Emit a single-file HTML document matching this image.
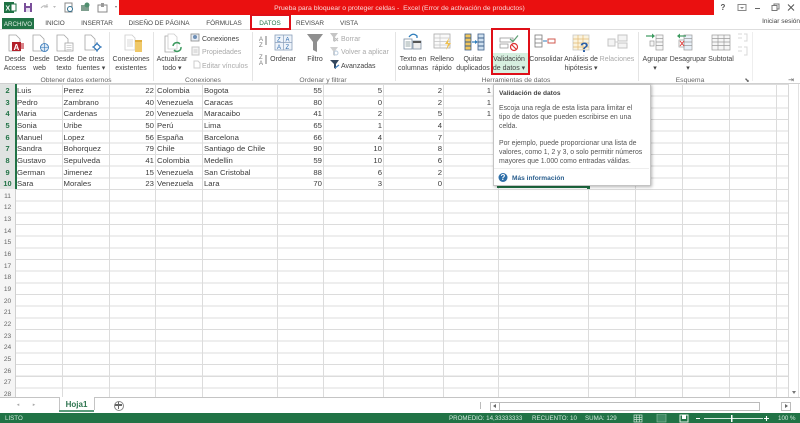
<!DOCTYPE html>
<html lang="es"><head><meta charset="utf-8"><title>Excel</title>
<style>
html,body{margin:0;padding:0;background:#fff}
#p{position:relative;width:800px;height:423px;overflow:hidden;background:#fff;font-family:"Liberation Sans",sans-serif;color:#444;font-size:7px;line-height:10px;filter:blur(.3px)}
#p div{position:absolute}
.t,.c{white-space:nowrap}
.c{transform:translateX(-50%);text-align:center}
.r{white-space:nowrap;transform:translateX(-100%)}
.b{line-height:9px;color:#444;margin-top:2px}
.g{color:#666;font-size:6.8px;margin-top:1.5px}
.tab{font-size:6.4px;color:#444;top:15px;margin-top:1px}
.m{margin-top:1.500px}
.s{font-size:7.75px;color:#3c3c3c;margin-top:1px}
.v{top:84px;height:313px;width:1px;background:#dcdcdc}
.n{left:0;width:15px;text-align:center;color:#666;font-size:6.6px;margin-top:1.500px}
.h{left:0;width:15px;height:11px;text-align:center;color:#217346;font-weight:bold;font-size:7.4px;line-height:11px}
.tip{font-size:6.9px;left:499px;color:#555;margin-top:2px}
.st{top:414px;color:#d3e8dc;font-size:6.2px;line-height:10px;white-space:nowrap}
</style></head><body><div id="p">

<!-- title bar -->
<div style="left:119px;top:0;width:595px;height:15px;background:#ea1010"></div>
<div class="c" style="left:399.500px;top:4px;color:#f8dcdc;font-size:6.85px">Prueba para bloquear o proteger celdas -&nbsp; Excel (Error de activación de productos)</div>
<svg style="position:absolute;left:0;top:0" width="800" height="30">
<rect x="4" y="2" width="10" height="11" fill="#1f7244"/><rect x="11" y="4" width="5" height="7" fill="#fff" stroke="#1f7244"/><text x="5.500" y="10.500" font-size="7" font-weight="bold" fill="#fff" font-family="Liberation Sans">X</text>
<rect x="24" y="3" width="8" height="9" fill="#7a4f9a"/><rect x="26" y="3" width="4" height="3" fill="#fff"/><rect x="26" y="8" width="4" height="4" fill="#e6dff0"/>
<path d="M41 8q3-4 7-1M47 4v3h-3" fill="none" stroke="#bbb"/><path d="M53 6h3l-1.500 2z" fill="#bbb"/>
<rect x="65" y="3" width="7" height="9" fill="#fff" stroke="#888"/><circle cx="70" cy="9" r="2.500" fill="#fff" stroke="#2f6f8f"/>
<rect x="81" y="5" width="8" height="6" fill="#7f9f8f"/><circle cx="87" cy="5" r="2.500" fill="#4f8f6f"/>
<rect x="98" y="5" width="9" height="7" fill="#fff" stroke="#888"/><rect x="101" y="3" width="3" height="4" fill="#999"/>
<path d="M115 6h2l-1 2z" fill="#777"/>
<rect x="738" y="4.500" width="8" height="6" fill="none" stroke="#888"/><path d="M740 7h4l-2 2z" fill="#888"/>
<path d="M755 8.500h5" stroke="#666"/><rect x="772" y="5.500" width="5" height="5" fill="none" stroke="#777"/><path d="M774 5.500v-1.500h5v5h-2" fill="none" stroke="#777"/>
<path d="M788 4.500l6 6M794 4.500l-6 6" stroke="#555"/>
</svg>
<div class="c" style="left:723px;top:3px;font-size:8px;color:#555;font-weight:bold">?</div>

<!-- tabs -->
<div style="left:0;top:29px;width:800px;height:1px;background:#dedede"></div>
<div style="left:2px;top:18px;width:32px;height:11px;background:#217346"></div>
<div class="c tab" style="left:18px;top:18px;color:#e6f2ea;line-height:11px;font-size:6.2px">ARCHIVO</div>
<div class="c tab" style="left:55px;top:17px;line-height:11px">INICIO</div>
<div class="c tab" style="left:97px;top:17px;line-height:11px">INSERTAR</div>
<div class="c tab" style="left:159px;top:17px;line-height:11px">DISEÑO DE PÁGINA</div>
<div class="c tab" style="left:224px;top:17px;line-height:11px">FÓRMULAS</div>
<div style="left:250px;top:14px;width:37px;height:12px;border:2px solid #df0f18;background:#fff"></div>
<div class="c tab" style="left:270px;top:17px;line-height:11px;color:#217346">DATOS</div>
<div class="c tab" style="left:310px;top:17px;line-height:11px">REVISAR</div>
<div class="c tab" style="left:349px;top:17px;line-height:11px">VISTA</div>
<div class="r" style="left:800px;top:17px;font-size:6.5px">Iniciar sesión</div>

<!-- ribbon separators -->
<div style="left:109px;top:32px;width:1px;height:49px;background:#e4e4e4"></div>
<div style="left:153px;top:32px;width:1px;height:49px;background:#e4e4e4"></div>
<div style="left:252px;top:32px;width:1px;height:49px;background:#e4e4e4"></div>
<div style="left:395px;top:32px;width:1px;height:49px;background:#e4e4e4"></div>
<div style="left:638px;top:32px;width:1px;height:49px;background:#e4e4e4"></div>
<div style="left:752px;top:32px;width:1px;height:49px;background:#eeeeee"></div>
<div style="left:0;top:83px;width:800px;height:1px;background:#d0d0d0"></div>

<div style="left:492px;top:53px;width:36px;height:20px;background:#d6efdf"></div>

<!-- ribbon icons -->
<svg style="position:absolute;left:0;top:29px" width="800" height="44" viewBox="0 29 800 44">
<g fill="#fff" stroke="#a5a5a5" stroke-width=".8">
<path d="M9 35h7l4 4v12H9z"/><path d="M33 35h7l4 4v12H33z"/><path d="M57 35h7l4 4v12H57z"/><path d="M85 35h6l4 4v11H85z"/>
<path d="M125 35h7l3 3v12h-10z" stroke="#ccc"/><path d="M165 36h7l3 3v13h-10z"/><path d="M168 34h6l3 3v12h-9z" stroke="#ccc"/>
</g>
<rect x="12" y="42" width="9" height="9" fill="#b3202a"/><text x="13.500" y="50" font-size="8" font-weight="bold" fill="#fff" font-family="Liberation Sans">A</text>
<rect x="21" y="43" width="3" height="6" fill="#d9848a"/>
<circle cx="44.500" cy="47.500" r="4" fill="#dbe8f5" stroke="#2c72b5" stroke-width=".8"/><path d="M40.500 47.500h8M44.500 43.500v8" stroke="#2c72b5" stroke-width=".6"/>
<rect x="65" y="43" width="8" height="8" fill="#fff" stroke="#a5a5a5" stroke-width=".8"/><path d="M66.500 45.500h5M66.500 47.500h5M66.500 49.500h5" stroke="#aaa" stroke-width=".6"/>
<path d="M97 42v10M92 47h10" stroke="#2c72b5" stroke-width=".8"/><rect x="94.500" y="44.500" width="5" height="5" transform="rotate(45 97 47)" fill="#fff" stroke="#2c72b5" stroke-width="1.200"/>
<path d="M127 40h6M127 42h6M127 44h6M127 46h6" stroke="#d9d9d9"/><rect x="135" y="41" width="7" height="11" fill="#efc868"/><rect x="135" y="40" width="7" height="2" fill="#e0ad3e"/>
<path d="M173 46a4 4 0 0 1 7-2M181 47a4 4 0 0 1-7 3" fill="none" stroke="#3c9a5f" stroke-width="1.500"/>
<rect x="191" y="34" width="8" height="7" fill="#e8edf5" stroke="#8a8a8a" stroke-width=".8"/><circle cx="195" cy="37" r="2" fill="#6f8fb5"/>
<rect x="192" y="47" width="7" height="8" fill="#f5f5f5" stroke="#c5c5c5"/><path d="M193.500 50h4M193.500 52h4" stroke="#ccc"/>
<path d="M194 61h4l2 2v5h-6z" fill="#fff" stroke="#ccc"/>
<text x="259" y="41" font-size="6" fill="#777" font-family="Liberation Sans">A</text><text x="259" y="47" font-size="6" fill="#777" font-family="Liberation Sans">Z</text><path d="M266 36v9" stroke="#777"/>
<text x="259" y="59" font-size="6" fill="#777" font-family="Liberation Sans">Z</text><text x="259" y="65" font-size="6" fill="#777" font-family="Liberation Sans">A</text><path d="M266 55v9" stroke="#777"/>
<rect x="275" y="35" width="17" height="15" fill="#eef3fa" stroke="#8a9fba" stroke-width=".8"/><path d="M283.500 35v15M275 42.500h17" stroke="#8a9fba" stroke-width=".7"/>
<text x="277" y="41.500" font-size="6" fill="#2f6cae" font-family="Liberation Sans">Z</text><text x="285.500" y="41.500" font-size="6" fill="#2f6cae" font-family="Liberation Sans">A</text><text x="277" y="49" font-size="6" fill="#2f6cae" font-family="Liberation Sans">A</text><text x="285.500" y="49" font-size="6" fill="#2f6cae" font-family="Liberation Sans">Z</text>
<path d="M307 34h16l-6 8v10l-4-2v-8z" fill="#8f8f8f"/>
<path d="M330 33h8l-3 4v5l-2-1v-4z" fill="#c5c5c5"/><path d="M335 38l3 3M338 38l-3 3" stroke="#bbb"/>
<path d="M330 47h8l-3 4v5l-2-1v-4z" fill="#d0d0d0"/><circle cx="336" cy="53" r="2" fill="none" stroke="#bcd"/>
<path d="M330 60h9l-3 4v5l-2-1v-4z" fill="#33475f"/><path d="M335 68l4-3" stroke="#3f7fbf" stroke-width="1.200"/>
<rect x="404" y="39" width="8" height="10" fill="#fff" stroke="#7d8fa3" stroke-width=".8"/><path d="M405.500 42h5M405.500 44h5M405.500 46h5" stroke="#9aa"/><rect x="413" y="41" width="8" height="8" fill="#eee" stroke="#7d8fa3" stroke-width=".8"/><rect x="413" y="41" width="8" height="2" fill="#555"/>
<path d="M409 37q4-5 8-1v2" fill="none" stroke="#2f7dbb" stroke-width="1.300"/>
<rect x="434" y="34" width="16" height="14" fill="#fafafa" stroke="#aaa" stroke-width=".8"/><path d="M434 38h16M434 41.500h16M434 45h16M440 34v14" stroke="#c5c5c5" stroke-width=".7"/><path d="M449 38l-4 6h3l-2 6 5-7h-3z" fill="#efc04f"/>
<rect x="465" y="34" width="6" height="16" fill="#f0c55c" stroke="#3d5f8a" stroke-width=".8"/><path d="M465 38h6M465 42h6M465 46h6" stroke="#3d5f8a"/>
<rect x="478" y="34" width="6" height="16" fill="#cfe0ef" stroke="#3d5f8a" stroke-width=".8"/><path d="M478 38h6M478 42h6M478 46h6" stroke="#3d5f8a"/><path d="M472 42h4" stroke="#2f7dbb" stroke-width="1.200"/><path d="M475 40l3 2-3 2z" fill="#2f7dbb"/>
<rect x="500" y="38" width="13" height="4" fill="#fff" stroke="#999" stroke-width=".8"/><rect x="500" y="44" width="8" height="4" fill="#fff" stroke="#999" stroke-width=".8"/><path d="M510 39l3 2.500 5-6" fill="none" stroke="#5c9e72" stroke-width="1.200"/><circle cx="514" cy="47" r="3.500" fill="#fff" stroke="#d33" stroke-width="1.200"/><path d="M511.500 44.500l5 5" stroke="#d33" stroke-width="1.200"/>
<rect x="535" y="35" width="7" height="12" fill="#fff" stroke="#7a7a7a" stroke-width=".8"/><path d="M535 39h7M535 43h7" stroke="#7a7a7a" stroke-width=".7"/><path d="M543 41h4" stroke="#2f7dbb"/><rect x="548" y="39" width="7" height="4" fill="#fff" stroke="#d0584f"/>
<rect x="573" y="35" width="16" height="15" fill="#fbf3dd" stroke="#c9c9c9" stroke-width=".8"/><path d="M573 39h16M573 43h16M573 47h16M578 35v15M583 35v15" stroke="#e1b972" stroke-width=".7"/><text x="580" y="52" font-size="14" font-weight="bold" fill="#2a5fa8" font-family="Liberation Sans">?</text>
<rect x="608" y="39" width="7" height="7" fill="#f4f4f4" stroke="#c4c4c4"/><rect x="618" y="35" width="9" height="6" fill="#f4f4f4" stroke="#c4c4c4"/><rect x="618" y="43" width="9" height="5" fill="#f4f4f4" stroke="#c4c4c4"/><path d="M615 42h3" stroke="#ccc"/>
<path d="M646 36h7" stroke="#3c9a5f" stroke-width="1.200"/><path d="M652 33.500l3 2.500-3 2.500z" fill="#3c9a5f"/>
<g fill="#f6f6f6" stroke="#9a9a9a" stroke-width=".7"><rect x="656" y="35" width="7" height="15"/><rect x="650" y="41" width="4" height="5"/><rect x="684" y="35" width="8" height="15" fill="#e8f0f8"/><rect x="679" y="40" width="5" height="7" fill="#fff"/><rect x="712" y="35" width="18" height="15"/></g>
<path d="M656 38.500h7M656 42h7M656 45.500h7M684 38.500h8M684 42h8M684 45.500h8M712 38.500h18M712 42h18M712 45.500h18M718 35v15M724 35v15" stroke="#9a9a9a" stroke-width=".7"/>
<path d="M686 36h-7" stroke="#3c9a5f" stroke-width="1.200"/><path d="M680 33.500l-3 2.500 3 2.500z" fill="#3c9a5f"/><path d="M680 46l4-5M684 46l-4-5" stroke="#d33" stroke-width=".9"/>
<path d="M738 34h4M738 38h4M744 34h3v7h-3M738 47h4M738 51h4M744 47h3v8h-3" fill="none" stroke="#d8d8d8"/>
</svg>
<div style="left:491px;top:28px;width:35px;height:43px;border:2.500px solid #df0f18"></div>

<!-- ribbon labels -->
<div class="c b" style="left:15px;top:53px">Desde<br>Access</div>
<div class="c b" style="left:39.500px;top:53px">Desde<br>web</div>
<div class="c b" style="left:64px;top:53px">Desde<br>texto</div>
<div class="c b" style="left:91px;top:53px">De otras<br>fuentes ▾</div>
<div class="c b" style="left:131px;top:53px">Conexiones<br>existentes</div>
<div class="c b" style="left:172px;top:53px">Actualizar<br>todo ▾</div>
<div class="t m" style="left:202px;top:33px">Conexiones</div>
<div class="t m" style="left:202px;top:46px;color:#aaa">Propiedades</div>
<div class="t m" style="left:202px;top:60px;color:#aaa">Editar vínculos</div>
<div class="c b" style="left:283px;top:53px">Ordenar</div>
<div class="c b" style="left:315px;top:53px">Filtro</div>
<div class="t m" style="left:341px;top:33px;color:#aaa">Borrar</div>
<div class="t m" style="left:341px;top:46px;color:#aaa">Volver a aplicar</div>
<div class="t m" style="left:341px;top:60px">Avanzadas</div>
<div class="c b" style="left:413px;top:53px">Texto en<br>columnas</div>
<div class="c b" style="left:442px;top:53px">Relleno<br>rápido</div>
<div class="c b" style="left:473px;top:53px">Quitar<br>duplicados</div>
<div class="c b" style="left:509px;top:53px">Validación<br>de datos ▾</div>
<div class="c b" style="left:546px;top:53px">Consolidar</div>
<div class="c b" style="left:581px;top:53px">Análisis de<br>hipótesis ▾</div>
<div class="c b" style="left:617px;top:53px;color:#aaa">Relaciones</div>
<div class="c b" style="left:655px;top:53px">Agrupar<br>▾</div>
<div class="c b" style="left:688px;top:53px">Desagrupar<br>▾</div>
<div class="c b" style="left:721px;top:53px">Subtotal</div>
<div class="c g" style="left:76px;top:74px">Obtener datos externos</div>
<div class="c g" style="left:203px;top:74px">Conexiones</div>
<div class="c g" style="left:323px;top:74px">Ordenar y filtrar</div>
<div class="c g" style="left:516px;top:74px">Herramientas de datos</div>
<div class="c g" style="left:690px;top:74px">Esquema</div>
<div class="c g" style="left:747px;top:74px;font-size:6px">⬊</div>
<div class="c g" style="left:791px;top:74px;font-size:7px">⇥</div>

<!-- grid -->
<div style="left:0;top:84px;width:788px;height:313px;background:repeating-linear-gradient(to bottom,#dcdcdc 0,#dcdcdc 1px,#fff 1px,#fff 11.67px)"></div>
<div class="v" style="left:62px"></div><div class="v" style="left:109px"></div><div class="v" style="left:155px"></div><div class="v" style="left:202px"></div><div class="v" style="left:277px"></div><div class="v" style="left:323px"></div><div class="v" style="left:383px"></div><div class="v" style="left:443px"></div><div class="v" style="left:498px"></div><div class="v" style="left:588px"></div><div class="v" style="left:635px"></div><div class="v" style="left:682px"></div><div class="v" style="left:729px"></div><div class="v" style="left:776px"></div>
<div style="left:0;top:84px;width:15px;height:313px;background:#f5f5f5"></div>
<div style="left:0;top:84px;width:15px;height:105px;background:#dfe3e1"></div>
<div style="left:15px;top:84px;width:1px;height:313px;background:#d0d0d0"></div>
<div style="left:15px;top:84px;width:1.500px;height:105px;background:#217346"></div>

<div class="h" style="top:85px">2</div>
<div class="h" style="top:96.700px">3</div>
<div class="h" style="top:108.400px">4</div>
<div class="h" style="top:120px">5</div>
<div class="h" style="top:131.700px">6</div>
<div class="h" style="top:143.400px">7</div>
<div class="h" style="top:155px">8</div>
<div class="h" style="top:166.700px">9</div>
<div class="h" style="top:178.400px">10</div>
<div class="n" style="top:190px">11</div><div class="n" style="top:201.700px">12</div><div class="n" style="top:213.400px">13</div><div class="n" style="top:225px">14</div><div class="n" style="top:236.700px">15</div><div class="n" style="top:248.400px">16</div><div class="n" style="top:260px">17</div><div class="n" style="top:271.700px">18</div><div class="n" style="top:283.400px">19</div><div class="n" style="top:295px">20</div><div class="n" style="top:306.700px">21</div><div class="n" style="top:318.400px">22</div><div class="n" style="top:330px">23</div><div class="n" style="top:341.700px">24</div><div class="n" style="top:353.400px">25</div><div class="n" style="top:365px">26</div><div class="n" style="top:376.700px">27</div><div class="n" style="top:388.400px">28</div>

<div class="t s" style="left:17px;top:85px">Luis</div><div class="t s" style="left:63.500px;top:85px">Perez</div><div class="r s" style="left:154px;top:85px">22</div><div class="t s" style="left:157px;top:85px">Colombia</div><div class="t s" style="left:204px;top:85px">Bogota</div><div class="r s" style="left:322px;top:85px">55</div><div class="r s" style="left:382px;top:85px">5</div><div class="r s" style="left:442px;top:85px">2</div><div class="r s" style="left:491px;top:85px">1</div>
<div class="t s" style="left:17px;top:96.700px">Pedro</div><div class="t s" style="left:63.500px;top:96.700px">Zambrano</div><div class="r s" style="left:154px;top:96.700px">40</div><div class="t s" style="left:157px;top:96.700px">Venezuela</div><div class="t s" style="left:204px;top:96.700px">Caracas</div><div class="r s" style="left:322px;top:96.700px">80</div><div class="r s" style="left:382px;top:96.700px">0</div><div class="r s" style="left:442px;top:96.700px">2</div><div class="r s" style="left:491px;top:96.700px">1</div>
<div class="t s" style="left:17px;top:108.400px">Maria</div><div class="t s" style="left:63.500px;top:108.400px">Cardenas</div><div class="r s" style="left:154px;top:108.400px">20</div><div class="t s" style="left:157px;top:108.400px">Venezuela</div><div class="t s" style="left:204px;top:108.400px">Maracaibo</div><div class="r s" style="left:322px;top:108.400px">41</div><div class="r s" style="left:382px;top:108.400px">2</div><div class="r s" style="left:442px;top:108.400px">5</div><div class="r s" style="left:491px;top:108.400px">1</div>
<div class="t s" style="left:17px;top:120px">Sonia</div><div class="t s" style="left:63.500px;top:120px">Uribe</div><div class="r s" style="left:154px;top:120px">50</div><div class="t s" style="left:157px;top:120px">Perú</div><div class="t s" style="left:204px;top:120px">Lima</div><div class="r s" style="left:322px;top:120px">65</div><div class="r s" style="left:382px;top:120px">1</div><div class="r s" style="left:442px;top:120px">4</div>
<div class="t s" style="left:17px;top:131.700px">Manuel</div><div class="t s" style="left:63.500px;top:131.700px">Lopez</div><div class="r s" style="left:154px;top:131.700px">56</div><div class="t s" style="left:157px;top:131.700px">España</div><div class="t s" style="left:204px;top:131.700px">Barcelona</div><div class="r s" style="left:322px;top:131.700px">66</div><div class="r s" style="left:382px;top:131.700px">4</div><div class="r s" style="left:442px;top:131.700px">7</div>
<div class="t s" style="left:17px;top:143.400px">Sandra</div><div class="t s" style="left:63.500px;top:143.400px">Bohorquez</div><div class="r s" style="left:154px;top:143.400px">79</div><div class="t s" style="left:157px;top:143.400px">Chile</div><div class="t s" style="left:204px;top:143.400px">Santiago de Chile</div><div class="r s" style="left:322px;top:143.400px">90</div><div class="r s" style="left:382px;top:143.400px">10</div><div class="r s" style="left:442px;top:143.400px">8</div>
<div class="t s" style="left:17px;top:155px">Gustavo</div><div class="t s" style="left:63.500px;top:155px">Sepulveda</div><div class="r s" style="left:154px;top:155px">41</div><div class="t s" style="left:157px;top:155px">Colombia</div><div class="t s" style="left:204px;top:155px">Medellin</div><div class="r s" style="left:322px;top:155px">59</div><div class="r s" style="left:382px;top:155px">10</div><div class="r s" style="left:442px;top:155px">6</div>
<div class="t s" style="left:17px;top:166.700px">German</div><div class="t s" style="left:63.500px;top:166.700px">Jimenez</div><div class="r s" style="left:154px;top:166.700px">15</div><div class="t s" style="left:157px;top:166.700px">Venezuela</div><div class="t s" style="left:204px;top:166.700px">San Cristobal</div><div class="r s" style="left:322px;top:166.700px">88</div><div class="r s" style="left:382px;top:166.700px">6</div><div class="r s" style="left:442px;top:166.700px">2</div>
<div class="t s" style="left:17px;top:178.400px">Sara</div><div class="t s" style="left:63.500px;top:178.400px">Morales</div><div class="r s" style="left:154px;top:178.400px">23</div><div class="t s" style="left:157px;top:178.400px">Venezuela</div><div class="t s" style="left:204px;top:178.400px">Lara</div><div class="r s" style="left:322px;top:178.400px">70</div><div class="r s" style="left:382px;top:178.400px">3</div><div class="r s" style="left:442px;top:178.400px">0</div>

<!-- selection -->
<div style="left:497px;top:186px;width:91px;height:2px;background:#217346"></div>
<div style="left:587px;top:186px;width:3px;height:3px;background:#217346"></div>

<!-- tooltip -->
<div style="left:493px;top:84px;width:156px;height:100px;background:#fff;border:1px solid #c4c4c4;box-shadow:1px 1px 3px rgba(0,0,0,.3)"></div>
<div class="t tip" style="top:87px;font-weight:bold;color:#444;font-size:6.6px">Validación de datos</div>
<div class="t tip" style="top:102px">Escoja una regla de esta lista para limitar el</div>
<div class="t tip" style="top:111px">tipo de datos que pueden escribirse en una</div>
<div class="t tip" style="top:120px">celda.</div>
<div class="t tip" style="top:137px">Por ejemplo, puede proporcionar una lista de</div>
<div class="t tip" style="top:146px">valores, como 1, 2 y 3, o solo permitir números</div>
<div class="t tip" style="top:155px">mayores que 1.000 como entradas válidas.</div>
<div style="left:494px;top:168px;width:155px;height:1px;background:#eee"></div>
<div class="c" style="left:503px;top:172.500px;width:9px;height:9px;border-radius:50%;background:#2f6fa8;color:#fff;font-size:8px;line-height:9px;font-weight:bold">?</div>
<div class="t" style="left:512px;top:173.500px;font-size:6.6px;font-weight:bold;color:#2b5f8e">Más información</div>

<!-- vertical scrollbar -->
<div style="left:788px;top:84px;width:9px;height:313px;background:#fff;border-left:1px solid #d8d8d8;border-right:1px solid #e2e2e2"></div>
<div style="left:791.500px;top:391px;width:0;height:0;border:2.500px solid transparent;border-top:3px solid #777"></div>
<div style="left:0;top:397px;width:800px;height:1px;background:#c4c4c4"></div>

<!-- sheet bar -->
<div style="left:59px;top:397px;width:34px;height:13px;background:#fff;border-left:1px solid #c4c4c4;border-right:1px solid #c4c4c4"></div>
<div style="left:59px;top:410px;width:35px;height:1.500px;background:#5a9b7b"></div>
<div class="c" style="left:76.500px;top:400px;font-size:8px;font-weight:bold;color:#2f7550">Hoja1</div>
<div class="c" style="left:18px;top:400px;font-size:5px;color:#aaa">◂</div>
<div class="c" style="left:34px;top:400px;font-size:5px;color:#aaa">▸</div>
<div style="left:113.500px;top:400.500px;width:8px;height:8px;border:1px solid #888;border-radius:50%"></div>
<div style="left:115px;top:404px;width:7px;height:1.500px;background:#666"></div>
<div style="left:117.700px;top:401.500px;width:1.500px;height:7px;background:#666"></div>
<div style="left:480px;top:402px;width:1px;height:7px;background:#bbb"></div>
<div style="left:490px;top:402px;width:8px;height:7px;border:1px solid #bbb;background:#fff"></div>
<div style="left:499px;top:402px;width:259px;height:7px;border:1px solid #bbb;background:#fff"></div>
<div style="left:781px;top:402px;width:8px;height:7px;border:1px solid #bbb;background:#fff"></div>
<div style="left:492.500px;top:403.500px;width:0;height:0;border:2.500px solid transparent;border-right:3px solid #666;border-left:0"></div>
<div style="left:784.500px;top:403.500px;width:0;height:0;border:2.500px solid transparent;border-left:3px solid #666;border-right:0"></div>

<!-- status bar -->
<div style="left:0;top:413px;width:800px;height:10px;background:#217346"></div>
<div class="st" style="left:5px">LISTO</div>
<div class="st" style="left:449px">PROMEDIO: 14,33333333</div>
<div class="st" style="left:532px">RECUENTO: 10</div>
<div class="st" style="left:585px">SUMA: 129</div>
<svg style="position:absolute;left:630px;top:414px" width="170" height="9">
<path d="M4 1h8v7H4zM4 3.300h8M4 5.600h8M6.700 1v7M9.300 1v7" fill="none" stroke="#cfe3d7" stroke-width=".7"/>
<rect x="27" y="0" width="9" height="8" fill="#3f8a63" stroke="#8fbfa5" stroke-width=".6"/>
<path d="M50 1h8v7h-8z" fill="none" stroke="#e6f2ea"/><rect x="52" y="1" width="4" height="4" fill="#fff"/>
<path d="M74 4.500h59" stroke="#d5e8dd"/><rect x="101" y="1" width="1.500" height="7" fill="#fff"/><path d="M66 4.500h4M134 4.500h5M136.500 2v5" stroke="#fff" stroke-width="1.100"/>
</svg>
<div class="st" style="left:778px">100 %</div>

</div></body></html>
